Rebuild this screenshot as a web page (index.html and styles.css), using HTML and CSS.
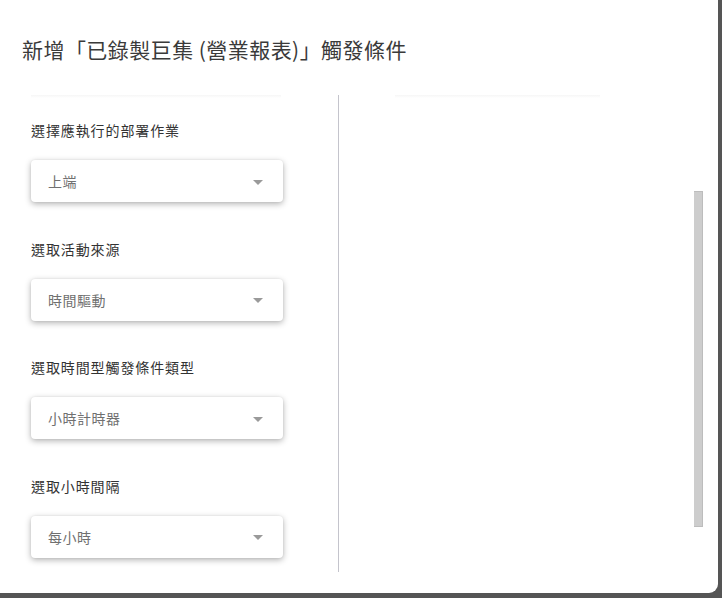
FILE: index.html
```html
<!DOCTYPE html>
<html lang="zh-Hant">
<head>
<meta charset="utf-8">
<link rel="stylesheet" href="styles.css">
</head>
<body>
<div class="dialog">
  <h1 class="title">新增「已錄製巨集 (營業報表)」觸發條件</h1>
  <div class="body">
    <div class="left">
      <div class="fade-line"></div>
      <div class="field">
        <div class="label">選擇應執行的部署作業</div>
        <div class="select"><span>上端</span><span class="arrow"></span></div>
      </div>
      <div class="field">
        <div class="label">選取活動來源</div>
        <div class="select"><span>時間驅動</span><span class="arrow"></span></div>
      </div>
      <div class="field">
        <div class="label">選取時間型觸發條件類型</div>
        <div class="select"><span>小時計時器</span><span class="arrow"></span></div>
      </div>
      <div class="field">
        <div class="label">選取小時間隔</div>
        <div class="select"><span>每小時</span><span class="arrow"></span></div>
      </div>
    </div>
    <div class="divider"></div>
    <div class="right">
      <div class="fade-line right-line"></div>
    </div>
  </div>
  <div class="scrollbar"></div>
</div>
</body>
</html>
```

FILE: styles.css
```css
html, body {
  margin: 0;
  padding: 0;
}
body {
  width: 722px;
  height: 598px;
  background: #555555;
  font-family: "Noto Sans CJK TC", "Noto Sans", sans-serif;
  overflow: hidden;
}
.dialog {
  position: relative;
  width: 718px;
  height: 593px;
  background: #ffffff;
  border-bottom-right-radius: 9px;
  box-sizing: border-box;
}
.title {
  margin: 0;
  padding: 34px 0 0 22px;
  height: 95px;
  box-sizing: border-box;
  font-size: 21px;
  line-height: 30px;
  font-weight: 400;
  color: #3a3a3a;
  letter-spacing: 0.45px;
}
.body {
  display: flex;
  height: 477px;
}
.left {
  width: 338px;
  box-sizing: border-box;
  padding-left: 31px;
}
.fade-line {
  width: 250px;
  height: 3px;
  background: linear-gradient(#f6f6f6, #ffffff);
}
.right-line {
  width: 205px;
  margin-left: 56px;
}
.field {
  padding-top: 22px;
  margin-bottom: 14.5px;
}
.label {
  font-size: 14px;
  line-height: 20px;
  color: #333333;
  height: 20px;
  letter-spacing: 0.9px;
}
.select {
  margin-top: 20px;
  width: 252px;
  height: 42px;
  box-sizing: border-box;
  padding: 0 20px 0 17px;
  border-radius: 4px;
  background: #ffffff;
  box-shadow: 0 2px 6px rgba(0, 0, 0, 0.3), 0 0 2px rgba(0, 0, 0, 0.08);
  display: flex;
  align-items: center;
  justify-content: space-between;
  font-size: 14px;
  color: #707070;
  letter-spacing: 0.5px;
}
.arrow {
  width: 0;
  height: 0;
  border-left: 5px solid transparent;
  border-right: 5px solid transparent;
  border-top: 5px solid #9a9a9a;
  margin-top: 2px;
}
.divider {
  width: 1px;
  height: 477px;
  background: #c4c4cc;
}
.right {
  flex: 1;
}
.scrollbar {
  position: absolute;
  left: 694px;
  top: 191px;
  width: 9px;
  height: 336px;
  background: #cdcdcd;
  border-right: 1px solid #bdbdbd;
  border-bottom: 1px solid #bdbdbd;
  border-top: 1px solid #bdbdbd;
  box-sizing: border-box;
}
```
